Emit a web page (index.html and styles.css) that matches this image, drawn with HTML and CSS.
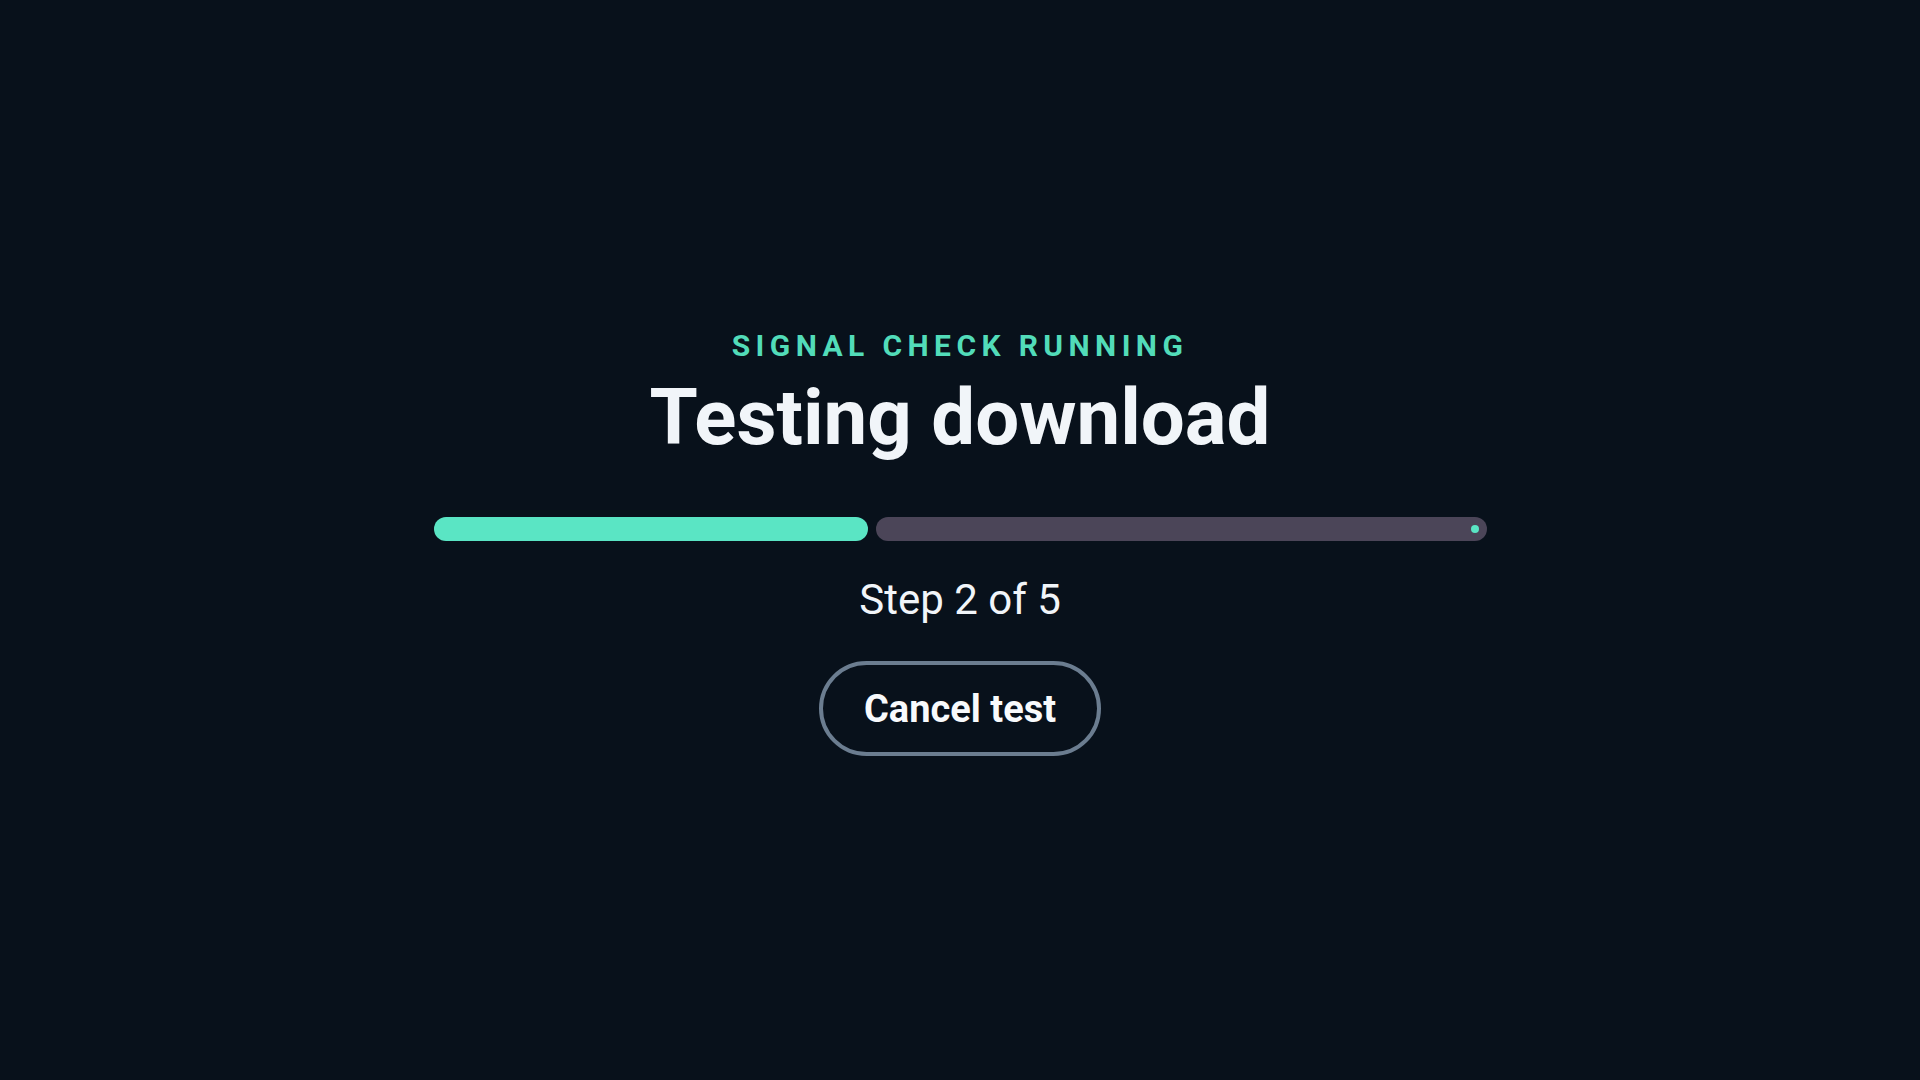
FILE: index.html
```html
<!DOCTYPE html>
<html lang="en">
<head>
<meta charset="utf-8">
<title>Signal check</title>
<link rel="stylesheet" href="styles.css">
</head>
<body>
  <main class="screen">
    <section class="check">
      <p class="check__eyebrow">SIGNAL CHECK RUNNING</p>
      <h1 class="check__title">Testing download</h1>
      <div class="progress" role="progressbar" aria-valuemin="1" aria-valuemax="5" aria-valuenow="2">
        <div class="progress__done"></div>
        <div class="progress__rest"><span class="progress__pulse"></span></div>
      </div>
      <p class="check__step">Step 2 of 5</p>
      <button class="check__cancel" type="button">Cancel test</button>
    </section>
  </main>
</body>
</html>
```
FILE: styles.css
```css
* { box-sizing: border-box; }

html, body {
  margin: 0;
  height: 100%;
  background: #08111b;
}

body {
  font-family: Roboto, "Liberation Sans", sans-serif;
  color: #f1f5f9;
}

.screen {
  height: 100vh;
  display: flex;
  align-items: center;
  justify-content: center;
}

.check {
  display: flex;
  flex-direction: column;
  align-items: center;
  padding-top: 4px;
}

.check__eyebrow {
  margin: 0;
  font-size: 30px;
  line-height: 36px;
  font-weight: 700;
  letter-spacing: 0.18em;
  color: #52dcb9;
}

.check__title {
  margin: 9px 0 0;
  font-size: 78px;
  line-height: 90px;
  font-weight: 700;
  color: #f1f5f9;
}

.progress {
  margin-top: 54px;
  display: flex;
  gap: 8px;
  width: 1053px;
  height: 24px;
}

.progress__done {
  width: 434px;
  border-radius: 12px;
  background: #5ae5c4;
}

.progress__rest {
  flex: 1;
  border-radius: 12px;
  background: #4b4558;
  display: flex;
  align-items: center;
  justify-content: flex-end;
  padding-right: 8px;
}

.progress__pulse {
  width: 8px;
  height: 8px;
  border-radius: 50%;
  background: #5ae5c4;
}

.check__step {
  margin: 34px 0 0;
  font-size: 42px;
  line-height: 50px;
  font-weight: 400;
  color: #f1f5f9;
}

.check__cancel {
  margin-top: 36px;
  height: 95px;
  padding: 0 41px;
  border: 4px solid #6b7d90;
  border-radius: 48px;
  background: transparent;
  font-family: inherit;
  font-size: 38px;
  font-weight: 700;
  color: #f8fafc;
  cursor: pointer;
}
```
